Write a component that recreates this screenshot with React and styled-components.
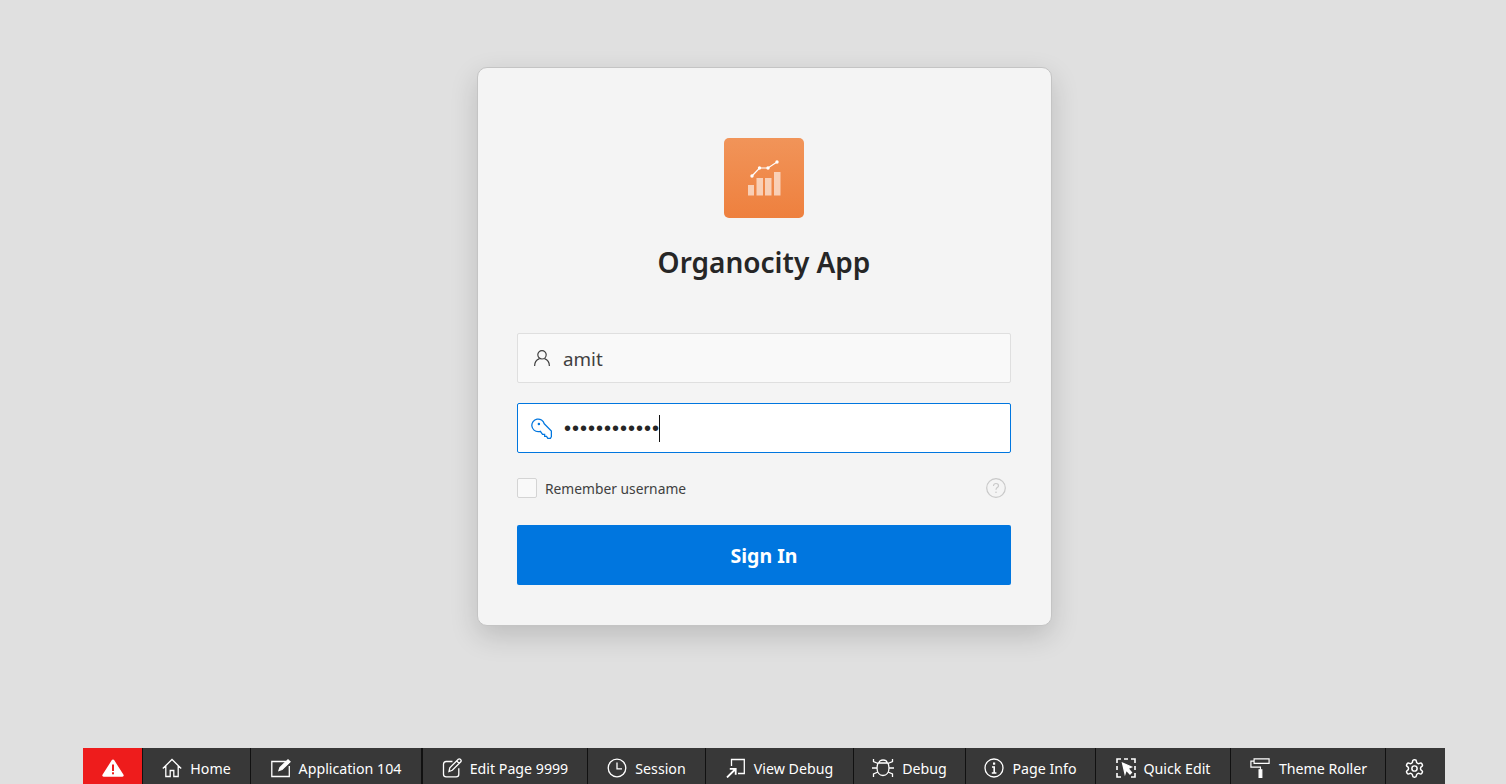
import * as React from 'react';
import styled, { createGlobalStyle } from 'styled-components';

const GlobalStyle = createGlobalStyle`
  html, body { margin: 0; padding: 0; height: 100%; }
  body {
    background: #e0e0e0;
    font-family: "Noto Sans", "Open Sans", "Liberation Sans", sans-serif;
    overflow: hidden;
  }
`;

const toolbarItems = [
  { label: 'Home', width: 107, icon: <HomeIcon /> },
  { label: 'Application 104', width: 170, icon: <AppIcon />, thickEnd: true },
  { label: 'Edit Page 9999', width: 164, icon: <EditIcon /> },
  { label: 'Session', width: 117, icon: <ClockIcon /> },
  { label: 'View Debug', width: 147, icon: <ViewDebugIcon /> },
  { label: 'Debug', width: 111, icon: <BugIcon /> },
  { label: 'Page Info', width: 129, icon: <InfoIcon /> },
  { label: 'Quick Edit', width: 134, icon: <QuickEditIcon /> },
  { label: 'Theme Roller', width: 154, icon: <RollerIcon /> },
];

function App() {
  return (
    <Page>
      <GlobalStyle />
      <Card>
        <LogoTile>
          <LogoIcon />
        </LogoTile>
        <Title>Organocity App</Title>
        <Form>
          <Field>
            <UserIcon />
            <FieldText>amit</FieldText>
          </Field>
          <Field $focused>
            <KeyIcon />
            <Dots>••••••••••••</Dots>
            <Caret />
          </Field>
          <RememberRow>
            <CheckBox />
            <RememberLabel>Remember username</RememberLabel>
            <HelpIcon />
          </RememberRow>
          <SignIn>Sign In</SignIn>
        </Form>
      </Card>
      <Toolbar>
        <AlertButton>
          <AlertIcon />
        </AlertButton>
        {toolbarItems.map((item) => (
          <ToolItem key={item.label} $width={item.width} $thickEnd={item.thickEnd}>
            {item.icon}
            <ToolLabel>{item.label}</ToolLabel>
          </ToolItem>
        ))}
        <GearButton>
          <GearIcon />
        </GearButton>
      </Toolbar>
    </Page>
  );
}

function LogoIcon() {
  return (
    <svg width="40" height="40" viewBox="0 0 40 40">
      <g fill="#ffffff" fillOpacity="0.6">
        <rect x="4" y="27" width="6" height="10.500" />
        <rect x="12.500" y="20" width="6.500" height="17.500" />
        <rect x="21" y="20" width="6.500" height="17.500" />
        <rect x="30" y="14" width="6.500" height="23.500" />
      </g>
      <path d="M8 18 L15.500 10 L24 10 L33 4" fill="none" stroke="#fff" strokeWidth="1.200" />
      <g fill="#fff">
        <circle cx="8" cy="18" r="1.700" />
        <circle cx="15.500" cy="10" r="1.700" />
        <circle cx="24" cy="10" r="1.700" />
        <circle cx="33" cy="4" r="1.700" />
      </g>
    </svg>
  );
}

function UserIcon() {
  return (
    <FieldIcon viewBox="0 0 18 18" fill="none" stroke="#404040" strokeWidth="1.200">
      <circle cx="9" cy="5.800" r="4.200" />
      <path d="M1.600 17c0-4 2.600-6.600 4.900-7.400M16.400 17c0-4-2.600-6.600-4.900-7.400" />
    </FieldIcon>
  );
}

function KeyIcon() {
  return (
    <FieldIcon $wide viewBox="0 0 20 20" fill="none" stroke="#0076df" strokeWidth="1.200">
      <path d="M12.600 5.500 L19.400 12.500 V17.800 L18.500 19.400 H16 L14.800 17.500 H13 V15.600 H11 L8.900 12.700 C8.300 12.900 7.600 13 7 13 A6 6 0 1 1 12.600 5.500 Z" />
      <circle cx="7.500" cy="5.800" r="1.200" fill="#0076df" stroke="none" />
    </FieldIcon>
  );
}

function HelpIcon() {
  return (
    <HelpSvg viewBox="0 0 20 20" fill="none" stroke="#c9c9c9" strokeWidth="1.200">
      <circle cx="10" cy="10" r="9.300" />
      <path d="M7.500 8c0-1.600 1.100-2.500 2.500-2.500s2.500.9 2.500 2.200c0 1.900-2.500 1.900-2.500 4" />
      <circle cx="10" cy="14.300" r=".8" fill="#c9c9c9" stroke="none" />
    </HelpSvg>
  );
}

function AlertIcon() {
  return (
    <svg width="22" height="18" viewBox="0 0 22 18">
      <path d="M11 .5c.6 0 1 .3 1.300.8l9.200 14.500c.5.900 0 1.900-1.100 1.900H1.600c-1.100 0-1.600-1-1.100-1.900L9.700 1.300c.3-.5.700-.8 1.300-.8z" fill="#fff" />
      <rect x="10" y="5.500" width="2" height="6.500" fill="#ee1c1c" />
      <rect x="10" y="13.300" width="2" height="2" fill="#ee1c1c" />
    </svg>
  );
}

function HomeIcon() {
  return (
    <ToolSvg viewBox="0 0 20 20">
      <path d="M.8 10.500 10 1.500l9.200 9M3.800 8v10.500h4.400v-6h3.600v6h4.400V8" />
    </ToolSvg>
  );
}

function AppIcon() {
  return (
    <ToolSvg viewBox="0 0 20 20">
      <path d="M15 3.500H.8v15h17.500V8" />
      <path d="M8 12.500l1-3L17 1.800l2 2-8 7.700z" fill="#fff" />
    </ToolSvg>
  );
}

function EditIcon() {
  return (
    <ToolSvg viewBox="0 0 20 20">
      <path d="M10.500 3.500H4.200C2.500 3.500 1.500 4.500 1.500 6.200v10c0 1.600 1 2.600 2.700 2.600h10c1.700 0 2.600-1 2.600-2.600v-6" />
      <path d="M7 13.500l.8-3.700L16.300 1.300c.6-.6 1.500-.6 2 0l.5.500c.5.600.5 1.400 0 2l-8.500 8.500zM14.800 3l2.300 2.400" />
    </ToolSvg>
  );
}

function ClockIcon() {
  return (
    <ToolSvg viewBox="0 0 20 20">
      <circle cx="10" cy="10" r="8.800" />
      <path d="M10 4.500V10.800H15" />
    </ToolSvg>
  );
}

function ViewDebugIcon() {
  return (
    <ToolSvg viewBox="0 0 20 20">
      <path d="M5.500 8V1.500h12.800v14H12" />
      <path d="M1 19.500 9 11.500M3.800 10.800H9.700V16.700" strokeWidth="1.800" />
    </ToolSvg>
  );
}

function BugIcon() {
  return (
    <ToolSvg $width={22} viewBox="0 0 22 20">
      <path d="M7 5c0-2 1.800-3 4-3s4 1 4 3zM6.200 5h9.600c.8 1.300 1.200 3 1.200 5 0 4.500-2.500 7.500-6 7.500S5 14.500 5 10c0-2 .4-3.700 1.200-5z" />
      <path d="M1.500 1v2.500L6 5.500M20.500 1v2.500L16 5.500M0 10h5M22 10h-5M1.500 19v-3L6 14M20.500 19v-3L16 14" />
    </ToolSvg>
  );
}

function InfoIcon() {
  return (
    <ToolSvg viewBox="0 0 20 20">
      <circle cx="10" cy="10" r="9" />
      <rect x="9" y="4.500" width="2.200" height="2.200" fill="#fff" stroke="none" />
      <path d="M8 9h2.200v5.500M7.800 15h4.600" strokeWidth="1.600" />
    </ToolSvg>
  );
}

function QuickEditIcon() {
  return (
    <ToolSvg viewBox="0 0 20 20">
      <path d="M1 5V1h4M8 1h4M15 1h4v4M19 8v4M19 15v4h-4M5 19H1v-4M1 8v4" strokeWidth="1.600" />
      <path d="M6.500 5l9 4-3.500 1.500 3.500 4-1.500 1.500-3.800-4-1.200 3.800z" fill="#fff" />
    </ToolSvg>
  );
}

function RollerIcon() {
  return (
    <ToolSvg $width={22} viewBox="0 0 22 22">
      <path d="M4.500 1h16.500v5H4.500zM4.500 3.500H1v6.500h10.500v3" />
      <rect x="10" y="13" width="3" height="8.500" fill="#fff" />
    </ToolSvg>
  );
}

function GearIcon() {
  return (
    <svg width="21" height="21" viewBox="0 0 24 24" fill="none" stroke="#fff" strokeWidth="1.700" strokeLinecap="round" strokeLinejoin="round">
      <path d="M12.220 2h-.44a2 2 0 0 0-2 2v.18a2 2 0 0 1-1 1.730l-.43.250a2 2 0 0 1-2 0l-.15-.08a2 2 0 0 0-2.730.73l-.22.380a2 2 0 0 0 .73 2.730l.15.100a2 2 0 0 1 1 1.720v.510a2 2 0 0 1-1 1.740l-.15.090a2 2 0 0 0-.73 2.730l.22.380a2 2 0 0 0 2.730.73l.15-.08a2 2 0 0 1 2 0l.43.250a2 2 0 0 1 1 1.730V20a2 2 0 0 0 2 2h.44a2 2 0 0 0 2-2v-.18a2 2 0 0 1 1-1.730l.43-.250a2 2 0 0 1 2 0l.15.080a2 2 0 0 0 2.730-.73l.22-.390a2 2 0 0 0-.73-2.730l-.15-.080a2 2 0 0 1-1-1.740v-.500a2 2 0 0 1 1-1.740l.15-.090a2 2 0 0 0 .73-2.730l-.22-.380a2 2 0 0 0-2.730-.73l-.15.080a2 2 0 0 1-2 0l-.43-.250a2 2 0 0 1-1-1.730V4a2 2 0 0 0-2-2z" />
      <circle cx="12" cy="12" r="3" />
    </svg>
  );
}

const Page = styled.div`
  display: flex;
  flex-direction: column;
  align-items: center;
  height: 100vh;
  box-sizing: border-box;
  padding: 67px 0 0 22px;
`;

const Card = styled.main`
  width: 575px;
  height: 559px;
  box-sizing: border-box;
  margin-left: 1px;
  padding: 70px 40px 0 39px;
  display: flex;
  flex-direction: column;
  align-items: center;
  background: #f4f4f4;
  border: 1px solid #c4c4c4;
  border-radius: 10px;
  box-shadow: 0 10px 28px rgba(0, 0, 0, 0.16);
`;

const LogoTile = styled.div`
  width: 80px;
  height: 80px;
  display: flex;
  align-items: center;
  justify-content: center;
  border-radius: 5px;
  background: linear-gradient(180deg, #f19459, #ee803e);
`;

const Title = styled.h1`
  margin: 26px 0 49px;
  height: 40px;
  font-size: 28px;
  line-height: 36px;
  font-weight: 600;
  color: #262626;
`;

const Form = styled.div`
  width: 494px;
  display: flex;
  flex-direction: column;
`;

const Field = styled.div`
  height: 50px;
  box-sizing: border-box;
  display: flex;
  align-items: center;
  padding-left: ${(p) => (p.$focused ? '13px' : '15px')};
  margin-bottom: 20px;
  border: 1px solid ${(p) => (p.$focused ? '#0076df' : '#dfdfdf')};
  border-radius: 2px;
  background: ${(p) => (p.$focused ? '#ffffff' : '#f9f9f9')};
`;

const FieldIcon = styled.svg`
  width: ${(p) => (p.$wide ? '21px' : '18px')};
  height: ${(p) => (p.$wide ? '21px' : '18px')};
  flex: none;
  margin-right: 12px;
`;

const FieldText = styled.span`
  font-size: 18.800px;
  padding-top: 2px;
  color: #404040;
`;

const Dots = styled.span`
  font-size: 20px;
  letter-spacing: 1px;
  color: #262626;
  font-family: "Liberation Sans", sans-serif;
`;

const Caret = styled.span`
  width: 1px;
  height: 27px;
  margin-left: -1px;
  background: #111111;
`;

const RememberRow = styled.div`
  height: 20px;
  margin: 5px 0 27px;
  display: flex;
  align-items: center;
`;

const CheckBox = styled.span`
  width: 20px;
  height: 20px;
  box-sizing: border-box;
  border: 1px solid #d4d4d4;
  border-radius: 2px;
  background: #f9f9f9;
`;

const RememberLabel = styled.span`
  margin-left: 8px;
  font-size: 13.800px;
  color: #404040;
`;

const HelpSvg = styled.svg`
  width: 20px;
  height: 20px;
  margin-left: auto;
  margin-right: 5px;
`;

const SignIn = styled.button`
  height: 60px;
  border: 0;
  border-radius: 2px;
  background: #0076df;
  color: #ffffff;
  font-family: inherit;
  font-size: 19.500px;
  font-weight: 700;
`;

const Toolbar = styled.nav`
  margin-top: auto;
  width: 1362px;
  height: 36px;
  display: flex;
  background: #383838;
`;

const AlertButton = styled.div`
  width: 60px;
  box-sizing: border-box;
  padding-top: 4px;
  display: flex;
  align-items: center;
  justify-content: center;
  background: #ee1c1c;
  border-right: 1px solid #111111;
`;

const ToolItem = styled.div`
  width: ${(p) => p.$width}px;
  box-sizing: content-box;
  padding-top: 4px;
  display: flex;
  align-items: center;
  justify-content: center;
  gap: 8px;
  border-right: ${(p) => (p.$thickEnd ? '2px' : '1px')} solid #111111;
  color: #ffffff;
`;

const ToolSvg = styled.svg`
  width: ${(p) => p.$width || 20}px;
  height: 20px;
  flex: none;
  fill: none;
  stroke: #ffffff;
  stroke-width: 1.3;
`;

const ToolLabel = styled.span`
  font-size: 14.200px;
  white-space: nowrap;
`;

const GearButton = styled.div`
  flex: 1;
  padding-top: 4px;
  display: flex;
  align-items: center;
  justify-content: center;
  padding-right: 2px;
`;

export default App;
